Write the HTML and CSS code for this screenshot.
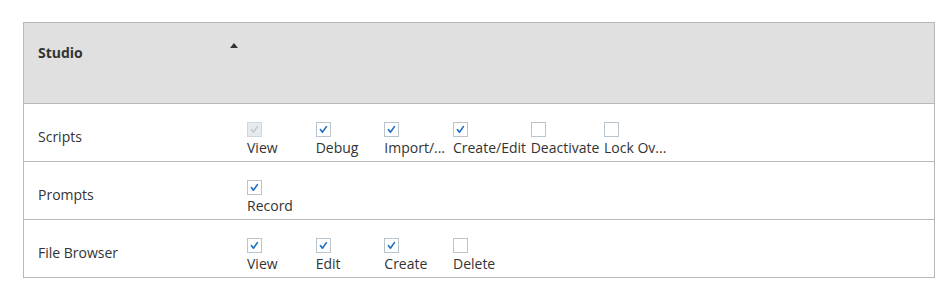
FILE: index.html
```html
<!DOCTYPE html>
<html lang="en">
<head>
  <meta charset="UTF-8">
  <meta name="viewport" content="width=device-width, initial-scale=1.0">
  <title>Permissions - Studio</title>
  <link rel="stylesheet" href="styles.css">
</head>
<body>
  <div class="perm-table">
    <!-- Cabecera -->
    <div class="perm-head">
      <div class="head-name">
        <span>Studio</span>
        <span class="sort-caret"></span>
      </div>
    </div>

    <!-- Scripts -->
    <div class="perm-row">
      <div class="row-name">Scripts</div>
      <div class="row-perms">
        <div class="perm disabled"><span class="box checked"><svg viewBox="0 0 13 13"><path d="M3.4 6.6 L5.4 9.2 L9.4 3.6"/></svg></span><span class="perm-label">View</span></div>
        <div class="perm"><span class="box checked"><svg viewBox="0 0 13 13"><path d="M3.4 6.6 L5.4 9.2 L9.4 3.6"/></svg></span><span class="perm-label">Debug</span></div>
        <div class="perm"><span class="box checked"><svg viewBox="0 0 13 13"><path d="M3.4 6.6 L5.4 9.2 L9.4 3.6"/></svg></span><span class="perm-label">Import/...</span></div>
        <div class="perm"><span class="box checked"><svg viewBox="0 0 13 13"><path d="M3.4 6.6 L5.4 9.2 L9.4 3.6"/></svg></span><span class="perm-label">Create/Edit</span></div>
        <div class="perm"><span class="box"></span><span class="perm-label">Deactivate</span></div>
        <div class="perm"><span class="box"></span><span class="perm-label">Lock Ov...</span></div>
      </div>
    </div>

    <!-- Prompts -->
    <div class="perm-row">
      <div class="row-name">Prompts</div>
      <div class="row-perms">
        <div class="perm"><span class="box checked"><svg viewBox="0 0 13 13"><path d="M3.4 6.6 L5.4 9.2 L9.4 3.6"/></svg></span><span class="perm-label">Record</span></div>
      </div>
    </div>

    <!-- File Browser -->
    <div class="perm-row">
      <div class="row-name">File Browser</div>
      <div class="row-perms">
        <div class="perm"><span class="box checked"><svg viewBox="0 0 13 13"><path d="M3.4 6.6 L5.4 9.2 L9.4 3.6"/></svg></span><span class="perm-label">View</span></div>
        <div class="perm"><span class="box checked"><svg viewBox="0 0 13 13"><path d="M3.4 6.6 L5.4 9.2 L9.4 3.6"/></svg></span><span class="perm-label">Edit</span></div>
        <div class="perm"><span class="box checked"><svg viewBox="0 0 13 13"><path d="M3.4 6.6 L5.4 9.2 L9.4 3.6"/></svg></span><span class="perm-label">Create</span></div>
        <div class="perm"><span class="box"></span><span class="perm-label">Delete</span></div>
      </div>
    </div>
  </div>
</body>
</html>
```

FILE: styles.css
```css
html, body {
  margin: 0;
  background: #fff;
}

body {
  padding: 22px 8px 0 23px;
  font-family: "Open Sans", "Liberation Sans", Arial, sans-serif;
  font-size: 14px;
  line-height: 20px;
  color: #333;
}

.perm-table {
  border: 1px solid #b8b8b8;
}

.perm-head {
  height: 80px;
  background-color: #e0e0e0;
  border-bottom: 1px solid #b8b8b8;
}

.head-name {
  width: 223px;
  box-sizing: border-box;
  display: flex;
  justify-content: space-between;
  padding: 20px 9px 0 14px;
  font-weight: bold;
  color: #333;
}

.sort-caret {
  width: 0;
  height: 0;
  margin-top: 0;
  border-left: 4.5px solid transparent;
  border-right: 4.5px solid transparent;
  border-bottom: 5px solid #333;
}

.perm-row {
  display: flex;
  height: 57px;
  border-bottom: 1px solid #b8b8b8;
}

.perm-row:last-child {
  border-bottom: none;
}

.row-name {
  width: 223px;
  box-sizing: border-box;
  padding: 23px 0 0 14px;
  color: #333;
}

.row-perms {
  display: flex;
  gap: 4.67px;
  padding-top: 18px;
}

.perm {
  min-width: 64px;
  display: flex;
  flex-direction: column;
  align-items: flex-start;
}

.box {
  width: 15px;
  height: 15px;
  box-sizing: border-box;
  border: 1px solid #b9c4cc;
  background-color: #fff;
  margin-bottom: 1px;
}

.box svg {
  display: block;
  width: 13px;
  height: 13px;
}

.box svg path {
  fill: none;
  stroke: #1b6ec2;
  stroke-width: 1.6;
  stroke-linecap: round;
  stroke-linejoin: round;
}

.perm.disabled .box {
  background-color: #e6ebef;
  border-color: #cfd7dd;
}

.perm.disabled .box svg path {
  stroke: #c2cad1;
}

.perm-label {
  white-space: nowrap;
  color: #333;
}
```
